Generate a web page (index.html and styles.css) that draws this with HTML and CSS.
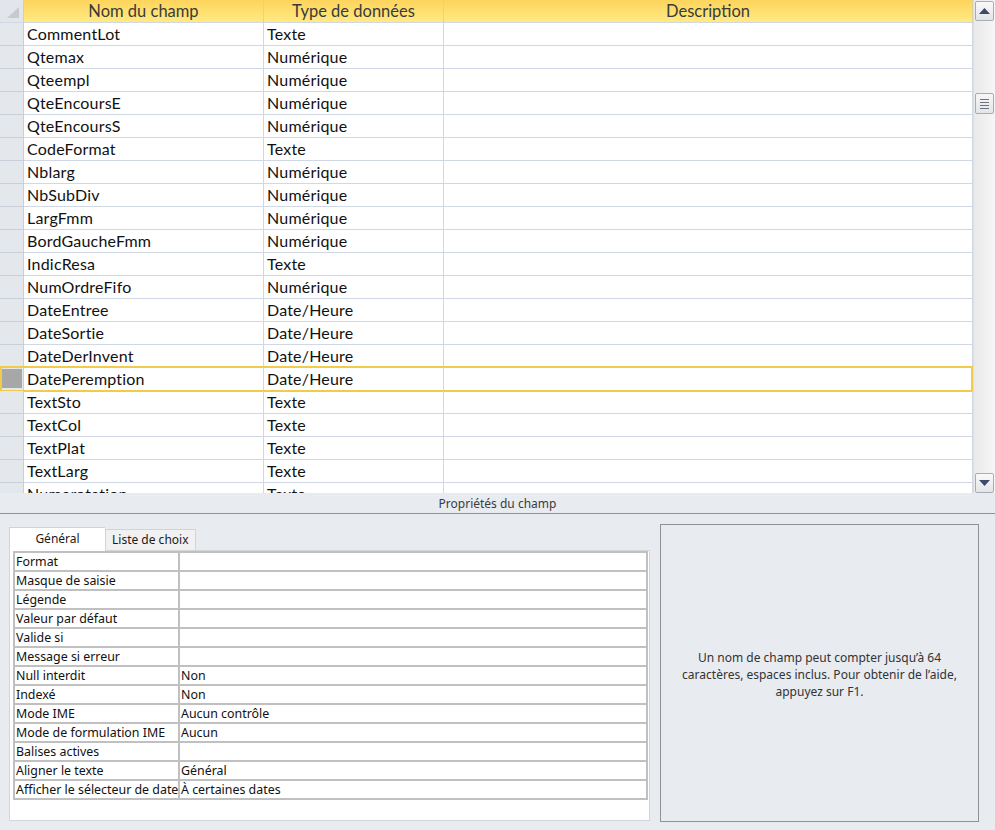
FILE: index.html
```html
<!DOCTYPE html>
<html lang="fr">
<head>
<meta charset="utf-8">
<title>Table - Mode Création</title>
<link rel="stylesheet" href="styles.css">
</head>
<body>
<div class="app">
  <div class="grid-area">
    <div class="grid">
      <div class="row head">
        <div class="cell sel corner"><span class="tri"></span></div>
        <div class="cell hc">Nom du champ</div>
        <div class="cell hc">Type de données</div>
        <div class="cell hc">Description</div>
      </div>
      <div class="row"><div class="cell sel"></div><div class="cell">CommentLot</div><div class="cell">Texte</div><div class="cell"></div></div>
      <div class="row"><div class="cell sel"></div><div class="cell">Qtemax</div><div class="cell">Numérique</div><div class="cell"></div></div>
      <div class="row"><div class="cell sel"></div><div class="cell">Qteempl</div><div class="cell">Numérique</div><div class="cell"></div></div>
      <div class="row"><div class="cell sel"></div><div class="cell">QteEncoursE</div><div class="cell">Numérique</div><div class="cell"></div></div>
      <div class="row"><div class="cell sel"></div><div class="cell">QteEncoursS</div><div class="cell">Numérique</div><div class="cell"></div></div>
      <div class="row"><div class="cell sel"></div><div class="cell">CodeFormat</div><div class="cell">Texte</div><div class="cell"></div></div>
      <div class="row"><div class="cell sel"></div><div class="cell">Nblarg</div><div class="cell">Numérique</div><div class="cell"></div></div>
      <div class="row"><div class="cell sel"></div><div class="cell">NbSubDiv</div><div class="cell">Numérique</div><div class="cell"></div></div>
      <div class="row"><div class="cell sel"></div><div class="cell">LargFmm</div><div class="cell">Numérique</div><div class="cell"></div></div>
      <div class="row"><div class="cell sel"></div><div class="cell">BordGaucheFmm</div><div class="cell">Numérique</div><div class="cell"></div></div>
      <div class="row"><div class="cell sel"></div><div class="cell">IndicResa</div><div class="cell">Texte</div><div class="cell"></div></div>
      <div class="row"><div class="cell sel"></div><div class="cell">NumOrdreFifo</div><div class="cell">Numérique</div><div class="cell"></div></div>
      <div class="row"><div class="cell sel"></div><div class="cell">DateEntree</div><div class="cell">Date/Heure</div><div class="cell"></div></div>
      <div class="row"><div class="cell sel"></div><div class="cell">DateSortie</div><div class="cell">Date/Heure</div><div class="cell"></div></div>
      <div class="row"><div class="cell sel"></div><div class="cell">DateDerInvent</div><div class="cell">Date/Heure</div><div class="cell"></div></div>
      <div class="row current"><div class="cell sel"><span class="mark"></span></div><div class="cell">DatePeremption</div><div class="cell">Date/Heure</div><div class="cell"></div></div>
      <div class="row"><div class="cell sel"></div><div class="cell">TextSto</div><div class="cell">Texte</div><div class="cell"></div></div>
      <div class="row"><div class="cell sel"></div><div class="cell">TextCol</div><div class="cell">Texte</div><div class="cell"></div></div>
      <div class="row"><div class="cell sel"></div><div class="cell">TextPlat</div><div class="cell">Texte</div><div class="cell"></div></div>
      <div class="row"><div class="cell sel"></div><div class="cell">TextLarg</div><div class="cell">Texte</div><div class="cell"></div></div>
      <div class="row"><div class="cell sel"></div><div class="cell">Numerotation</div><div class="cell">Texte</div><div class="cell"></div></div>
    </div>
    <div class="scrollbar">
      <div class="sbtn"><svg width="11" height="6" viewBox="0 0 11 6"><path d="M0 6 L5.5 0 L11 6 Z" fill="#3d4a6a"/></svg></div>
      <div class="track">
        <div class="thumb"><span></span><span></span><span></span><span></span></div>
      </div>
      <div class="sbtn"><svg width="11" height="6" viewBox="0 0 11 6"><path d="M0 0 L11 0 L5.5 6 Z" fill="#3d4a6a"/></svg></div>
    </div>
  </div>
  <div class="props-title">Propriétés du champ</div>
  <div class="props">
    <div class="left">
      <div class="tabs">
        <div class="tab active">Général</div>
        <div class="tab">Liste de choix</div>
      </div>
      <div class="panel">
        <div class="ptable">
          <div class="pc">Format</div><div class="pc"></div>
          <div class="pc">Masque de saisie</div><div class="pc"></div>
          <div class="pc">Légende</div><div class="pc"></div>
          <div class="pc">Valeur par défaut</div><div class="pc"></div>
          <div class="pc">Valide si</div><div class="pc"></div>
          <div class="pc">Message si erreur</div><div class="pc"></div>
          <div class="pc">Null interdit</div><div class="pc">Non</div>
          <div class="pc">Indexé</div><div class="pc">Non</div>
          <div class="pc">Mode IME</div><div class="pc">Aucun contrôle</div>
          <div class="pc">Mode de formulation IME</div><div class="pc">Aucun</div>
          <div class="pc">Balises actives</div><div class="pc"></div>
          <div class="pc">Aligner le texte</div><div class="pc">Général</div>
          <div class="pc">Afficher le sélecteur de date</div><div class="pc">À certaines dates</div>
        </div>
      </div>
    </div>
    <div class="help">
      <p>Un nom de champ peut compter jusqu’à 64 caractères, espaces inclus. Pour obtenir de l’aide, appuyez sur F1.</p>
    </div>
  </div>
</div>
</body>
</html>
```
FILE: styles.css
```css
* { box-sizing: border-box; }
html, body { margin: 0; padding: 0; }
body {
  width: 995px;
  height: 830px;
  overflow: hidden;
  background: #e8ebf0;
  font-family: "Noto Sans", "Open Sans", sans-serif;
  color: #1a1a1a;
}
.app { display: flex; flex-direction: column; height: 830px; }

.grid-area {
  display: flex;
  height: 493px;
  background: #fff;
  flex: none;
}
.grid {
  width: 973px;
  height: 493px;
  overflow: hidden;
  display: flex;
  flex-direction: column;
}
.row {
  display: grid;
  grid-template-columns: 24px 240px 180px 529px;
  height: 23px;
  flex: none;
  position: relative;
  font-family: "Lato", "Noto Sans", sans-serif;
  font-size: 16px;
  letter-spacing: 0.2px;
}
.cell {
  border-right: 1px solid #d0d7e5;
  border-bottom: 1px solid #d0d7e5;
  padding: 0 0 0 3px;
  line-height: 22px;
  white-space: nowrap;
  overflow: hidden;
  color: #111;
}
.cell.sel {
  background: #e4e7ec;
  border-right-color: #c9cfd8;
  border-bottom-color: #c9cfd8;
  padding: 0;
  position: relative;
}
.head .cell {
  background: linear-gradient(#fdd45c, #ffea82);
  border-bottom-color: #d0d7e5;
  border-right-color: #dfd0a0;
}
.head .hc {
  text-align: center;
  font-size: 16.5px;
  letter-spacing: 0;
  color: #3a3a3a;
  padding: 0;
  line-height: 22px;
}
.head .corner {
  background: #e2e5ea;
  border-right-color: #c9cfd8;
}
.corner .tri {
  position: absolute;
  right: 4px;
  bottom: 4px;
  width: 0;
  height: 0;
  border-left: 12px solid transparent;
  border-bottom: 11px solid #c5cad1;
}
.current::after {
  content: "";
  position: absolute;
  left: 0;
  right: 0;
  top: -2px;
  bottom: -1px;
  border: 2px solid #f1cc4a;
  pointer-events: none;
}
.mark {
  position: absolute;
  left: 1px;
  top: 1px;
  width: 21px;
  height: 19px;
  background: #a7a7a7;
}

.scrollbar {
  width: 22px;
  height: 493px;
  background: linear-gradient(90deg, #e9e9ea, #f6f6f6);
  border-left: 1px solid #dcdfe4;
  display: flex;
  flex-direction: column;
  align-items: center;
  padding: 1px 0 0;
}
.sbtn {
  width: 19px;
  height: 20px;
  border: 1px solid #a7acb5;
  border-radius: 2px;
  background: linear-gradient(#fafafa, #e3e4e6);
  display: flex;
  align-items: center;
  justify-content: center;
  flex: none;
}
.track {
  flex: 1;
  width: 100%;
  display: flex;
  justify-content: center;
  padding-top: 72px;
}
.thumb {
  width: 19px;
  height: 21px;
  border: 1px solid #a7acb5;
  border-radius: 2px;
  background: linear-gradient(#f7f7f7, #e4e5e7);
  display: flex;
  flex-direction: column;
  align-items: center;
  justify-content: center;
  gap: 2px;
}
.thumb span {
  width: 9px;
  height: 1px;
  background: #6c7180;
}

.props-title {
  height: 21px;
  flex: none;
  text-align: center;
  font-size: 12px;
  line-height: 21px;
  color: #3b3b3b;
  border-bottom: 1px solid #8b9099;
  background: #e8ebf0;
}
.props {
  display: flex;
  padding: 10px 16px 0 9px;
  gap: 10px;
}
.left {
  width: 641px;
  display: flex;
  flex-direction: column;
  padding-top: 3px;
}
.tabs {
  display: flex;
  align-items: flex-end;
  height: 23px;
}
.tab {
  font-size: 12px;
  color: #1a1a1a;
  height: 21px;
  line-height: 19px;
  padding: 0 6px;
  background: #f1f1f2;
  border: 1px solid #d3d3d6;
  border-bottom: none;
  position: relative;
}
.tab.active {
  width: 96px;
  height: 24px;
  background: #fff;
  text-align: center;
  line-height: 22px;
  border-right: none;
  top: 1px;
  z-index: 1;
}
.panel {
  height: 271px;
  background: #fff;
  border: 1px solid #d3d5d9;
  padding: 0 1px 0 3px;
}
.ptable {
  display: grid;
  grid-template-columns: 163px 466px;
  gap: 2px;
  padding: 2px;
  background: #c0c0c0;
  width: 635px;
}
.pc {
  background: #fff;
  height: 17px;
  font-size: 12.4px;
  line-height: 17px;
  padding-left: 1px;
  white-space: nowrap;
  overflow: hidden;
  color: #111;
}
.help {
  width: 319px;
  height: 298px;
  border: 1px solid #8e9196;
  display: flex;
  align-items: center;
  justify-content: center;
  text-align: center;
  padding: 2px 12px 0;
}
.help p {
  margin: 0;
  font-size: 12px;
  line-height: 17px;
  color: #333;
}
```
